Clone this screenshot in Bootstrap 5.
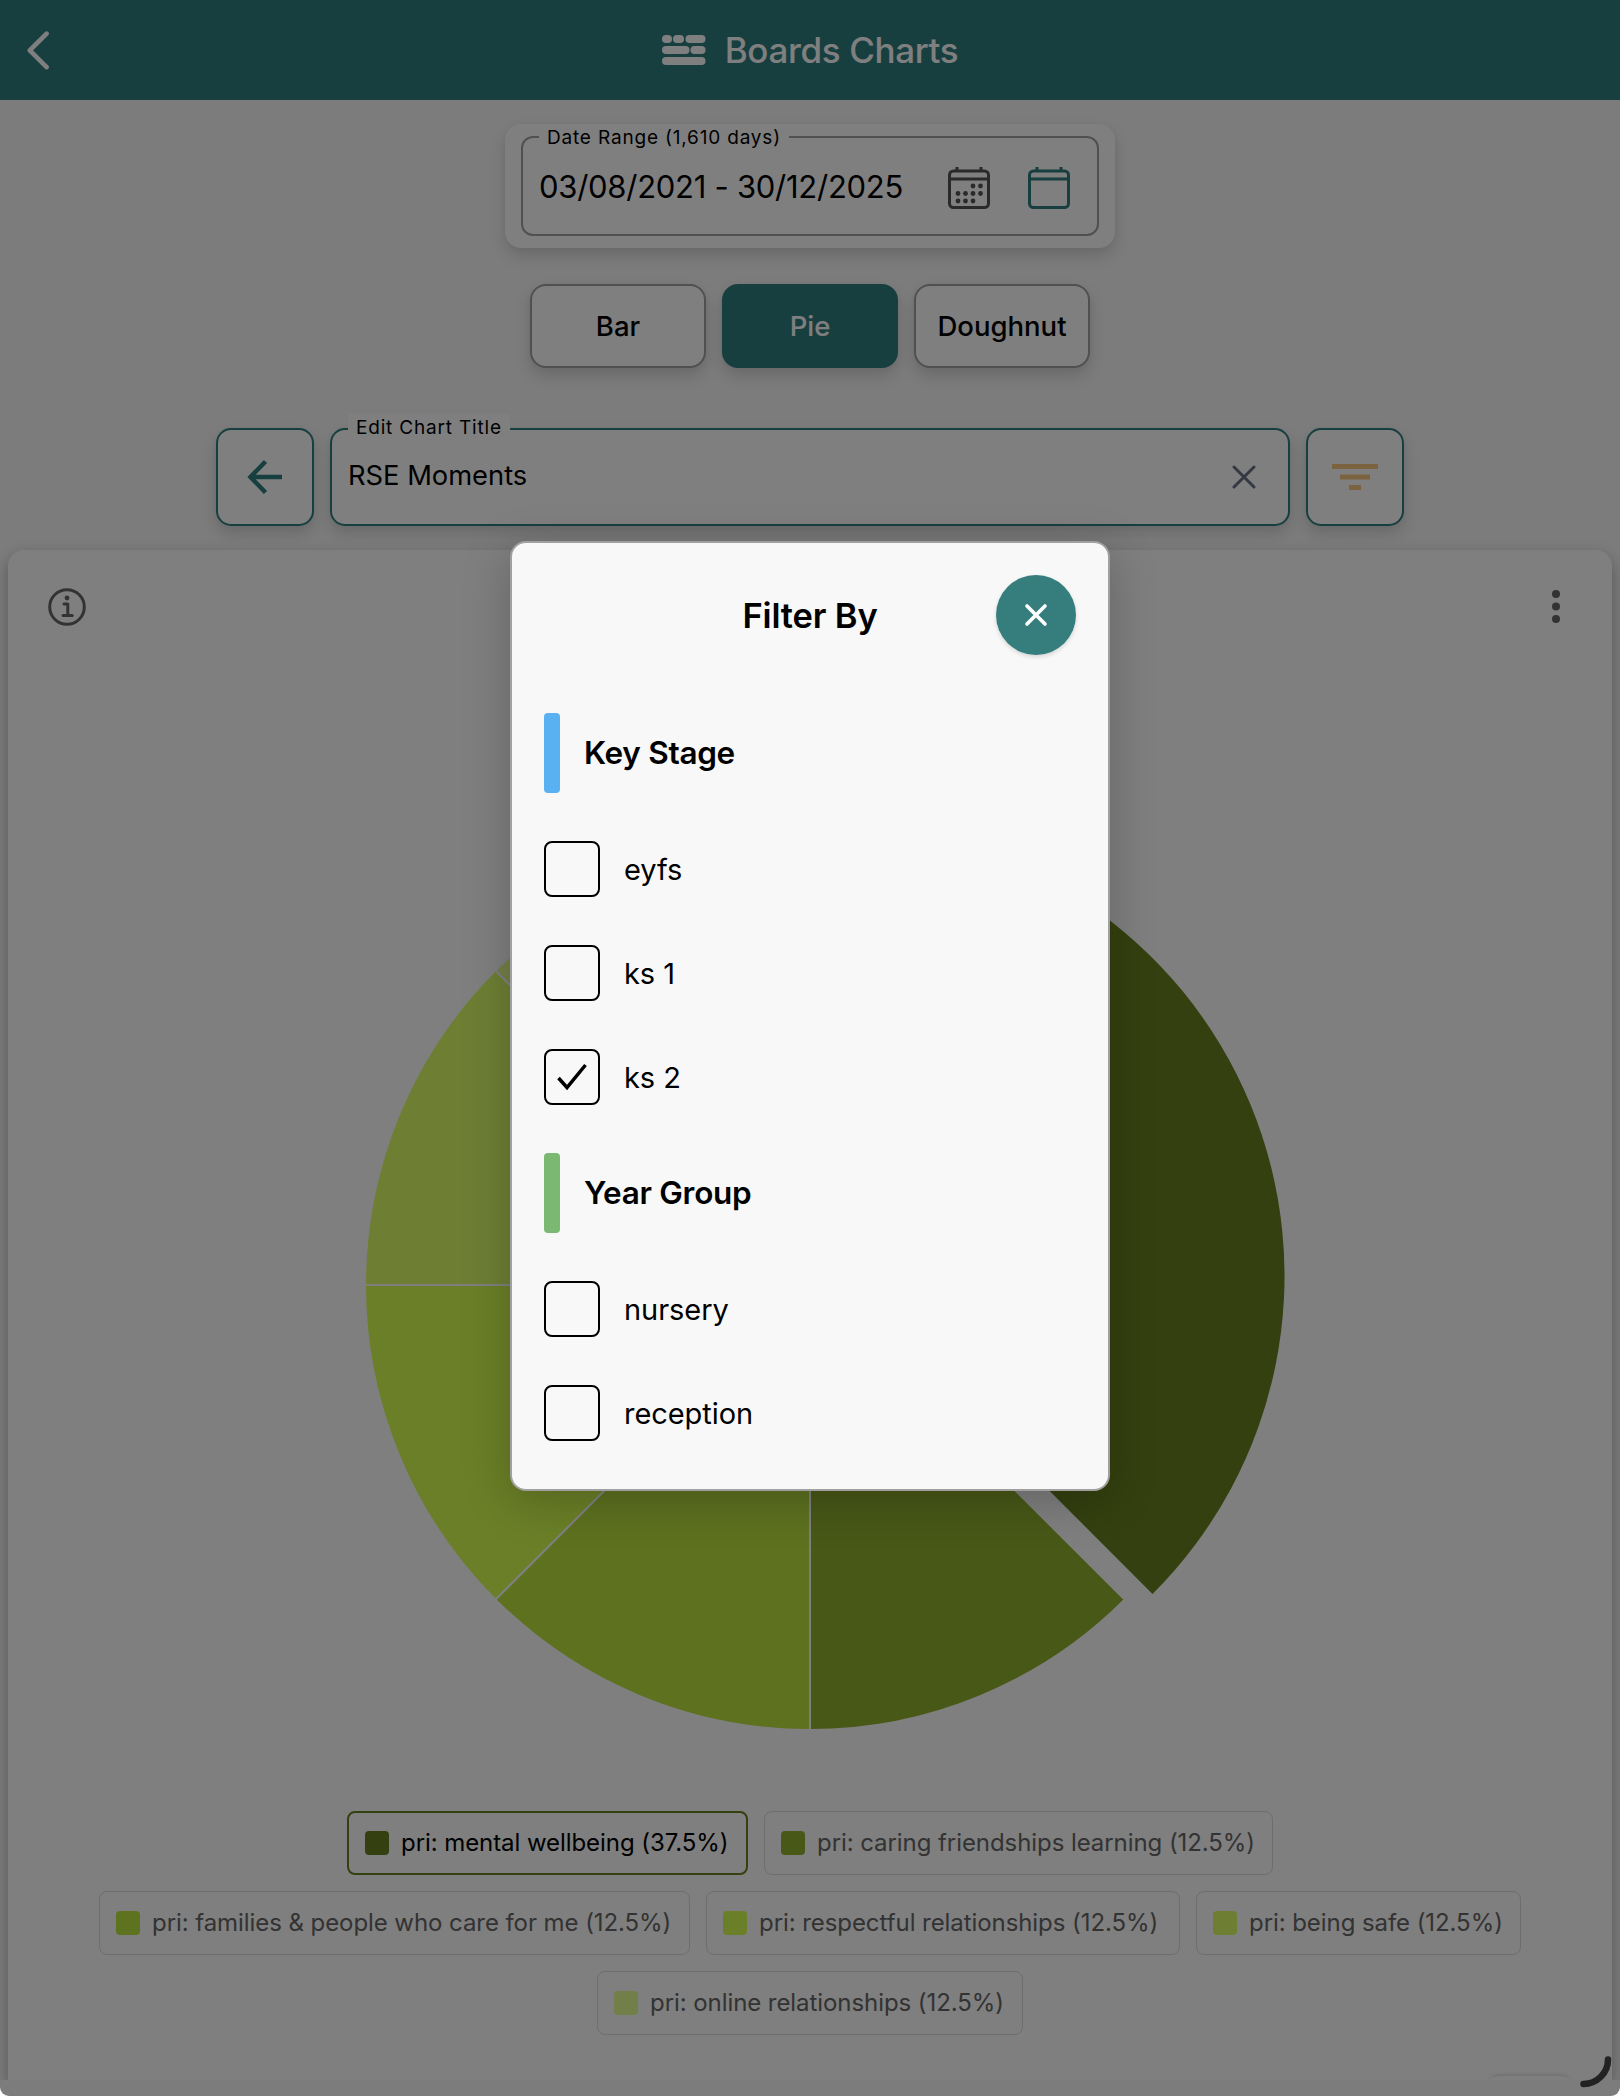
<!DOCTYPE html>
<html lang="en">
<head>
<meta charset="utf-8">
<meta name="viewport" content="width=device-width, initial-scale=1">
<title>Boards Charts</title>
<link href="https://cdn.jsdelivr.net/npm/bootstrap@5.3.0/dist/css/bootstrap.min.css" rel="stylesheet">
<style>
  :root { --teal: #317f7f; --soft: 0 8px 16px rgba(0,0,0,.14), 0 1px 6px rgba(0,0,0,.04); }
  html { background: #fff; }
  body { font-family: Inter, "Liberation Sans", sans-serif; color: #000; background: #fff; overflow: hidden; }
  .app { height: 2096px; background: #f8f8f8; border-radius: 0 0 9px 9px; }
  .topbar { height: 100px; background: var(--teal); color: #fff; padding: 0; }
  .topbar h1 { font-size: 35px; font-weight: 500; letter-spacing: -.35px; line-height: 1; gap: 19px; }
  .back-link { left: 27px; top: 30px; }
  .date-card { width: 610px; height: 124px; margin: 24px auto 0; padding: 12px 16px; border: 0; border-radius: 16px; box-shadow: var(--soft); }
  .outline { border: 2px solid #a0a0a0; border-radius: 12px; background: #fff; position: relative; }
  .cap-label { position: absolute; top: -16px; left: 16px; height: 28px; line-height: 28px; padding: 0 8px; background: #fff; font-size: 19px; letter-spacing: .82px; white-space: nowrap; }
  .date-card .cap-label { top: -14px; }
  .date-card .outline { height: 100px; padding: 3px 27px 0 16px; }
  .date-icons { gap: 38px; }
  .date-value { font-size: 31px; letter-spacing: -.27px; white-space: nowrap; flex: 1; }
  .types { margin-top: 36px; gap: 16px; }
  .types .btn { width: 176px; height: 84px; border: 2px solid #a0a0a0; border-radius: 16px; background: #fff; color: #000; font-size: 27.500px; font-weight: 500; padding: 2px 0 0; box-shadow: var(--soft); }
  .types .btn.active { background: var(--teal); border-color: var(--teal); color: #fff; }
  .title-row { width: 1188px; margin: 60px auto 0; gap: 16px; }
  .title-row .btn, .title-field { height: 98px; border: 2px solid var(--teal); border-radius: 15px; background: #fff; box-shadow: var(--soft); padding: 0; }
  .title-row .btn { width: 98px; }
  .title-field { flex: 1; padding: 0 32px 2px 16px; font-size: 27.300px; }
  .title-field .x-icon { margin-top: 2px; }
  .chart-card { margin: 24px 8px 0; height: 1530px; border: 0; border-radius: 16px 16px 0 0; box-shadow: 0 6px 16px rgba(0,0,0,.3); clip-path: inset(-10px -10px 0 -10px); background: #fff; }
  .chart-tools { height: 114px; padding: 0 51px 0 40px; }
  .chart-tools .info { margin-bottom: 1px; }
  .pie { display: block; margin-top: 142px; }
  .legend-list { margin-top: 67px; gap: 16px; }
  .legend-list .line { gap: 16px; }
  .key { height: 64px; border: 1px solid #dcdcdc; border-radius: 8px; padding: 0 0 0 16px; gap: 12px; font-size: 24px; letter-spacing: -.07px; color: #666; white-space: nowrap; }
  .key.on { border: 2px solid #68801e; color: #000; }
  .sw { width: 24px; height: 24px; border-radius: 4px; flex: none; }
  .k1 { width: 401px; } .k2 { width: 509px; } .k3 { width: 591px; } .k4 { width: 474px; } .k5 { width: 325px; } .k6 { width: 426px; }
  .k1 .sw { background: #68801e; } .k2 .sw { background: #90b02e; } .k3 .sw { background: #bce63e; }
  .k4 .sw { background: #d4ff4e; } .k5 .sw { background: #dcff68; } .k6 .sw { background: #e6ff92; }
  .fab-peek { width: 80px; height: 4px; right: 42px; bottom: 0; border-radius: 12px 12px 0 0 / 4px 4px 0 0; background: #fff; box-shadow: 0 0 5px rgba(0,0,0,.25); }
  .shade { background: rgba(0,0,0,.5); padding-top: 541px; }
  .filter-box { width: 600px; height: 950px; border: 2px solid #a0a0a0; border-radius: 16px; background: #f8f8f8; box-shadow: 0 10px 48px rgba(0,0,0,.22); padding: 32px; }
  .filter-head { height: 80px; margin-bottom: 58px; }
  .filter-head h2 { font-size: 34.500px; font-weight: 600; letter-spacing: -.15px; padding-top: 1px; }
  .close-round { width: 80px; height: 80px; border-radius: 50%; background: #367e7e; padding: 0; border: 0; box-shadow: 0 2px 4px rgba(0,0,0,.14); right: 0; top: 0; }
  .group-title { height: 80px; gap: 24px; font-size: 31.500px; font-weight: 600; letter-spacing: -.3px; margin-bottom: 48px; }
  .stripe { width: 16px; height: 80px; border-radius: 4px; }
  .stage { background: #59b1f1; } .year { background: #7bb872; }
  .choice { height: 56px; gap: 24px; font-size: 29px; margin-bottom: 48px; letter-spacing: -.05px; }
  .choice .txt { padding-top: 2px; }
  .box { width: 56px; height: 56px; border: 2px solid #000; border-radius: 8px; flex: none; }
  .grip { right: 0; bottom: 0; }
</style>
<script src="https://cdn.jsdelivr.net/npm/bootstrap@5.3.0/dist/js/bootstrap.bundle.min.js"></script>
</head>
<body>
<div class="app position-relative overflow-hidden">
  <header class="topbar navbar justify-content-center position-relative">
    <a href="#" class="back-link position-absolute lh-1" aria-label="Back"><svg width="23" height="40" fill="none" stroke="#fff" stroke-width="4.600" stroke-linecap="round" stroke-linejoin="round"><path d="M19.600 3.600 2.800 20.400l16.800 16.800"/></svg></a>
    <h1 class="d-flex align-items-center mb-0">
      <svg width="44" height="30" fill="#fff"><rect width="10" height="8" rx="4"/><rect x="11" width="11" height="8" rx="4"/><rect x="23.500" width="20" height="8" rx="4"/><rect y="11" width="27.500" height="8" rx="4"/><rect x="28.500" y="11" width="15" height="8" rx="4"/><rect y="22" width="43.500" height="8" rx="4"/></svg>
      <span>Boards Charts</span>
    </h1>
  </header>

  <section class="card date-card">
    <div class="outline d-flex align-items-center">
      <span class="cap-label">Date Range (1,610 days)</span>
      <span class="date-value">03/08/2021 - 30/12/2025</span>
      <div class="date-icons d-flex">
        <svg width="42" height="44" fill="none" stroke="#555" stroke-width="3"><rect x="1.500" y="5" width="39" height="36.500" rx="4"/><path d="M1 13h40M9 1v4M33 1v4"/><g fill="#555" stroke="none"><circle cx="25" cy="20" r="2.400"/><circle cx="32.500" cy="20" r="2.400"/><circle cx="10" cy="27.500" r="2.400"/><circle cx="17.500" cy="27.500" r="2.400"/><circle cx="25" cy="27.500" r="2.400"/><circle cx="32.500" cy="27.500" r="2.400"/><circle cx="10" cy="35" r="2.400"/><circle cx="17.500" cy="35" r="2.400"/><circle cx="25" cy="35" r="2.400"/></g></svg>
        <svg width="42" height="44" fill="none" stroke="#317f7f" stroke-width="3"><rect x="1.500" y="5" width="39" height="36.500" rx="4"/><path d="M1 13h40M9 1v4M33 1v4"/></svg>
      </div>
    </div>
  </section>

  <div class="types d-flex justify-content-center">
    <button class="btn">Bar</button>
    <button class="btn active">Pie</button>
    <button class="btn">Doughnut</button>
  </div>

  <div class="title-row d-flex">
    <button class="btn d-flex align-items-center justify-content-center" aria-label="Back"><svg width="36" height="36" fill="none" stroke="#317f7f" stroke-width="4.500"><path d="M35 18H4M18.500 2.500 3.500 18l15 15.500"/></svg></button>
    <div class="title-field outline d-flex align-items-center justify-content-between">
      <span class="cap-label">Edit Chart Title</span>
      <span>RSE Moments</span>
      <svg class="x-icon" width="24" height="24" stroke="#687084" stroke-width="3" stroke-linecap="round"><path d="M2 2l20 20M22 2 2 22"/></svg>
    </div>
    <button class="btn d-flex align-items-center justify-content-center" aria-label="Filter"><svg width="46" height="26" fill="#f8c67e"><path d="M0 0h46v5H0zM8 10.500h30v5H8zM17 21h12v5H17z"/></svg></button>
  </div>

  <main class="card chart-card">
    <div class="chart-tools d-flex align-items-center justify-content-between">
      <svg class="info" width="38" height="38" fill="none" stroke="#666" stroke-width="3" stroke-linecap="round" stroke-linejoin="round"><circle cx="19" cy="19" r="17.300"/><path d="M16 16h3.800v11M15 27.500h9.300"/><circle cx="19" cy="10" r="2.400" fill="#666" stroke="none"/></svg>
      <svg width="10" height="36" fill="#666"><circle cx="5" cy="5" r="4"/><circle cx="5" cy="17.500" r="4"/><circle cx="5" cy="30" r="4"/></svg>
    </div>
    <svg class="pie" width="1604" height="938" viewBox="8 806 1604 938">
      <g stroke="#fff" stroke-width="2" stroke-linejoin="bevel">
        <path fill="#90b02e" d="M810 1285 1124.600 1599.600A445 445 0 0 1 810 1730z"/>
        <path fill="#bae23e" d="M810 1285V1730A445 445 0 0 1 495.400 1599.600z"/>
        <path fill="#d4ff4e" d="M810 1285 495.400 1599.600A445 445 0 0 1 365 1285z"/>
        <path fill="#dcff68" d="M810 1285H365A445 445 0 0 1 495.400 970.400z"/>
        <path fill="#e6ff92" d="M810 1285 495.400 970.400A445 445 0 0 1 810 840z"/>
      </g>
      <path fill="#68801e" d="M835 1276V827A449 449 0 0 1 1152.500 1594z"/>
    </svg>
    <div class="legend-list d-flex flex-column align-items-center">
      <div class="line d-flex">
        <div class="key on k1 d-flex align-items-center"><i class="sw"></i>pri: mental wellbeing (37.5%)</div>
        <div class="key k2 d-flex align-items-center"><i class="sw"></i>pri: caring friendships learning (12.5%)</div>
      </div>
      <div class="line d-flex">
        <div class="key k3 d-flex align-items-center"><i class="sw"></i>pri: families &amp; people who care for me (12.5%)</div>
        <div class="key k4 d-flex align-items-center"><i class="sw"></i>pri: respectful relationships (12.5%)</div>
        <div class="key k5 d-flex align-items-center"><i class="sw"></i>pri: being safe (12.5%)</div>
      </div>
      <div class="line d-flex">
        <div class="key k6 d-flex align-items-center"><i class="sw"></i>pri: online relationships (12.5%)</div>
      </div>
    </div>
    <div class="fab-peek position-absolute"></div>
  </main>

  <div class="shade position-absolute top-0 start-0 w-100 h-100">
    <div class="filter-box mx-auto" role="dialog">
      <div class="filter-head d-flex align-items-center justify-content-center position-relative">
        <h2 class="mb-0">Filter By</h2>
        <button class="btn close-round position-absolute d-flex align-items-center justify-content-center" aria-label="Close"><svg width="24" height="24" stroke="#fff" stroke-width="3.600" stroke-linecap="round"><path d="M3 3l18 18M21 3 3 21"/></svg></button>
      </div>
      <div class="group-title d-flex align-items-center"><i class="stripe stage"></i>Key Stage</div>
      <div class="choice d-flex align-items-center"><span class="box"></span><span class="txt">eyfs</span></div>
      <div class="choice d-flex align-items-center"><span class="box"></span><span class="txt">ks 1</span></div>
      <div class="choice d-flex align-items-center"><span class="box d-flex align-items-center justify-content-center"><svg width="32" height="28" fill="none" stroke="#000" stroke-width="3.500"><path d="M2.500 15 11 24.500 29.500 2"/></svg></span><span class="txt">ks 2</span></div>
      <div class="group-title d-flex align-items-center"><i class="stripe year"></i>Year Group</div>
      <div class="choice d-flex align-items-center"><span class="box"></span><span class="txt">nursery</span></div>
      <div class="choice d-flex align-items-center"><span class="box"></span><span class="txt">reception</span></div>
    </div>
  </div>

  <svg class="grip position-absolute" width="44" height="44" fill="none" stroke="#222" stroke-width="6.500" stroke-linecap="round"><path d="M32 7.500C32 21 21 32 7.500 32"/></svg>
</div>
</body>
</html>
